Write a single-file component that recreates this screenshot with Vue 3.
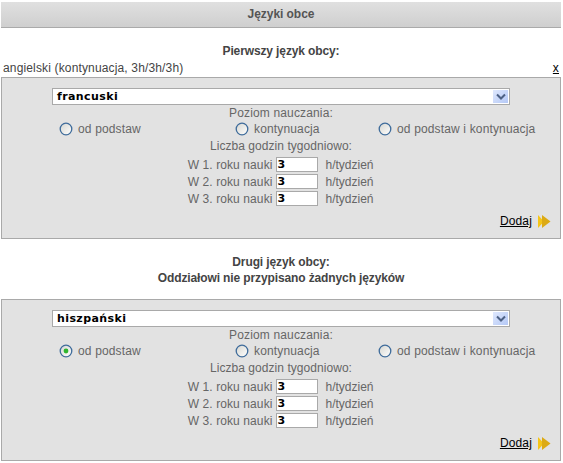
<template>
  <div class="page">
    <h1 class="title">Języki obce</h1>

    <h2 class="subhead first">Pierwszy język obcy:</h2>
    <div class="existing">
      <span>angielski (kontynuacja, 3h/3h/3h)</span>
      <a class="remove">x</a>
    </div>
    <LangPanel />

    <h2 class="subhead second">
      Drugi język obcy:<br />Oddziałowi nie przypisano żadnych języków
    </h2>
    <LangPanel />
  </div>
</template>

<script setup>
import { h } from 'vue'

const levels = ['od podstaw', 'kontynuacja', 'od podstaw i kontynuacja']
const years = [1, 2, 3]
let panelNo = 0

function radio(checked) {
  const kids = [
    h('circle', { cx: 7, cy: 7, r: 5.8, fill: 'url(#rg)', stroke: '#3f6c9b', 'stroke-width': 1.3 })
  ]
  if (checked) kids.push(h('circle', { cx: 7, cy: 7, r: 2.4, fill: '#2fb52f' }))
  return h('svg', { class: 'radio', width: 14, height: 14, viewBox: '0 0 14 14' }, [
    h('defs', [
      h('linearGradient', { id: 'rg', x1: 0, y1: 0, x2: 1, y2: 1 }, [
        h('stop', { offset: 0, 'stop-color': '#d6d6d0' }),
        h('stop', { offset: 1, 'stop-color': '#ffffff' })
      ])
    ]),
    ...kids
  ])
}

// same form twice, only the language and the checked radio differ
const LangPanel = {
  setup() {
    const second = panelNo++ % 2 === 1
    const lang = second ? 'hiszpański' : 'francuski'
    return () =>
      h('div', { class: 'panel' }, [
        h('div', { class: 'select' }, [
          h('span', lang),
          h('span', { class: 'arrow' }, [
            h('svg', { width: 10, height: 8, viewBox: '0 0 10 8' }, [
              h('path', { d: 'M1 1.5 5 5.5 9 1.5', fill: 'none', stroke: '#4d6185', 'stroke-width': 2 })
            ])
          ])
        ]),
        h('div', { class: 'caption' }, 'Poziom nauczania:'),
        h('div', { class: 'levels' }, levels.map((l, i) =>
          h('label', { class: 'level' }, [radio(second && i === 0), h('span', l)])
        )),
        h('div', { class: 'caption hours' }, 'Liczba godzin tygodniowo:'),
        ...years.map(y =>
          h('div', { class: 'year' }, [
            h('span', { class: 'year-label' }, `W ${y}. roku nauki`),
            h('span', { class: 'num' }, '3'),
            h('span', { class: 'unit' }, 'h/tydzień')
          ])
        ),
        h('div', { class: 'add' }, [
          h('a', 'Dodaj'),
          h('svg', { width: 13, height: 13, viewBox: '0 0 13 13' }, [
            h('path', { d: 'M0 0 6 6.5 0 13Z', fill: '#f5c518' }),
            h('path', { d: 'M4 0 12.5 6.5 4 13Z', fill: '#dcaa14' })
          ])
        ])
      ])
  }
}
</script>

<style>
body { background: #fff; }
</style>

<style scoped>
.page {
  width: 563px;
  height: 463px;
  overflow: hidden;
  padding: 2px 2px 0 1px;
  box-sizing: border-box;
  font: 12px "Liberation Sans", Arial, sans-serif;
  letter-spacing: 0.15px;
  color: #555;
}
.title {
  margin: 0;
  height: 25px;
  line-height: 25px;
  font-size: 12px;
  font-weight: bold;
  letter-spacing: -0.05px;
  text-align: center;
  color: #555;
  background: linear-gradient(#e0e0e0, #cfcfcf);
  border-bottom: 1px solid #aaa;
}
.subhead {
  margin: 0;
  font-size: 12px;
  font-weight: bold;
  letter-spacing: -0.12px;
  text-align: center;
  color: #444;
}
.subhead.first { padding-top: 16px; line-height: 15px; }
.subhead.second { padding-top: 15px; height: 45px; line-height: 16px; box-sizing: content-box; }
.existing {
  display: flex;
  justify-content: space-between;
  height: 18px;
  line-height: 16px;
  padding: 1px 2px 0 2px;
  box-sizing: border-box;
  color: #444;
}
.remove { color: #000; text-decoration: underline; }
:deep(.panel) {
  height: 162px;
  box-sizing: border-box;
  background: #e2e2e2;
  border: 1px solid #a9a9a9;
  padding-top: 10px;
  color: #666;
}
:deep(.select) {
  margin-left: 50px;
  width: 458px;
  height: 17px;
  box-sizing: border-box;
  display: flex;
  align-items: center;
  justify-content: space-between;
  background: #fff;
  border: 1px solid #a9a9a9;
  padding: 0 1px 0 4px;
  font: bold 11px "DejaVu Sans", Verdana, sans-serif;
  letter-spacing: 0.4px;
  color: #000;
}
:deep(.arrow) {
  width: 15px;
  height: 13px;
  display: flex;
  align-items: center;
  justify-content: center;
  background: linear-gradient(135deg, #dfe8fd, #b4c8f6);
}
:deep(.caption) {
  text-align: center;
  line-height: 15px;
  margin-top: 1px;
}
:deep(.levels) {
  display: grid;
  grid-template-columns: 176px 143px 1fr;
  padding-left: 57px;
  height: 16px;
  align-items: center;
}
:deep(.level) { display: flex; align-items: center; gap: 5px; }
:deep(.hours) { margin-top: 2px; margin-bottom: 2px; letter-spacing: 0.05px; }
:deep(.year) {
  display: flex;
  align-items: center;
  justify-content: center;
  height: 17px;
}
:deep(.year-label) { width: 85px; text-align: right; white-space: nowrap; letter-spacing: 0.1px; }
:deep(.num) {
  width: 42px;
  height: 15px;
  box-sizing: border-box;
  margin: 0 8px 0 3px;
  padding-left: 1px;
  background: #fff;
  border: 1px solid #a9a9a9;
  font: bold 11px/13px "DejaVu Sans", Verdana, sans-serif;
  letter-spacing: 0;
  color: #000;
}
:deep(.unit) { width: 49px; white-space: nowrap; letter-spacing: 0; }
:deep(.add) {
  display: flex;
  justify-content: flex-end;
  align-items: center;
  gap: 6px;
  margin-top: 7px;
  padding-right: 9px;
  color: #000;
}
:deep(.add a) { text-decoration: underline; }
</style>
